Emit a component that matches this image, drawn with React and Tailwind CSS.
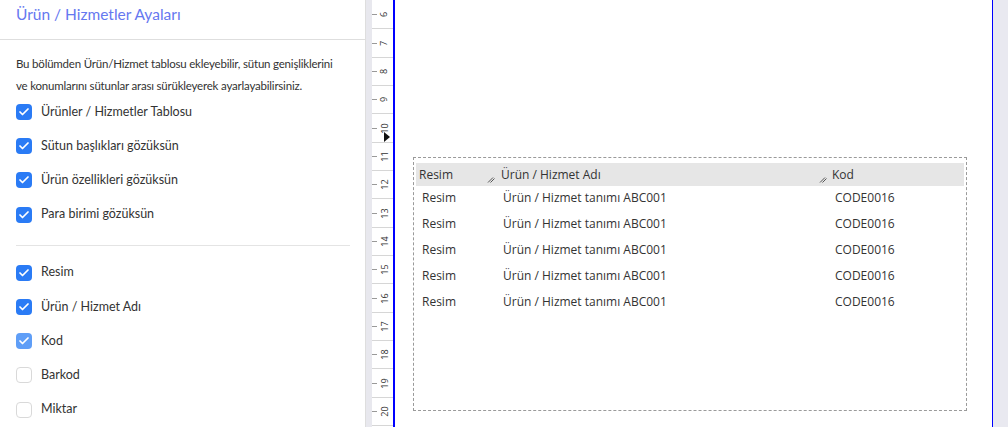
import { Check } from 'lucide-react'

const panelFont = { fontFamily: 'Lato, "Noto Sans", sans-serif' }
const tableFont = { fontFamily: '"Open Sans", "Noto Sans", sans-serif' }

const topChecks = [
  { label: 'Ürünler / Hizmetler Tablosu', state: 'on' },
  { label: 'Sütun başlıkları gözüksün', state: 'on' },
  { label: 'Ürün özellikleri gözüksün', state: 'on' },
  { label: 'Para birimi gözüksün', state: 'on' },
]

const columnChecks = [
  { label: 'Resim', state: 'on' },
  { label: 'Ürün / Hizmet Adı', state: 'on' },
  { label: 'Kod', state: 'dim' },
  { label: 'Barkod', state: 'off' },
  { label: 'Miktar', state: 'off' },
]

const rulerNums = [6, 7, 8, 9, 10, 11, 12, 13, 14, 15, 16, 17, 18, 19, 20]
const rows = [1, 2, 3, 4, 5]

function Box({ state }) {
  if (state === 'off') {
    return <span className="h-4 w-4 shrink-0 rounded-[4px] border border-[#d9d9d9] bg-white" />
  }
  return (
    <span
      className={`flex h-4 w-4 shrink-0 items-center justify-center rounded-[4px] ${
        state === 'dim' ? 'bg-[#5f9ef7]' : 'bg-[#2a7bf5]'
      }`}
    >
      <Check className="h-3 w-3 text-white" strokeWidth={3.5} />
    </span>
  )
}

function CheckRow({ label, state }) {
  return (
    <div className="flex h-[34.2px] shrink-0 items-center gap-[9px]">
      <Box state={state} />
      <span className="text-[12.5px] text-[#333]">{label}</span>
    </div>
  )
}

function Grip() {
  return (
    <svg width="8" height="8" viewBox="0 0 8 8" className="mb-[3px] mr-[2px] shrink-0">
      <path d="M1 7.5L6 2.5M3.5 7.5L7.5 3.5" stroke="#555" strokeWidth="1" fill="none" />
    </svg>
  )
}

export default function App() {
  return (
    <div className="flex h-[427px] w-[1008px] overflow-hidden bg-white">
      {/* sol ayar paneli */}
      <aside className="flex w-[366px] shrink-0 flex-col border-r border-[#dedede]" style={panelFont}>
        <div className="flex h-[40px] shrink-0 items-center border-b border-[#dedede] px-4 pb-[9px]">
          <h2 className="text-[15.5px] text-[#6678f0]">Ürün / Hizmetler Ayaları</h2>
        </div>
        <div className="shrink-0 px-4 pt-[13px]">
          <p className="whitespace-nowrap text-[11.5px] leading-[22px] tracking-[-0.2px] text-[#333]">
            Bu bölümden Ürün/Hizmet tablosu ekleyebilir, sütun genişliklerini
            <br />
            ve konumlarını sütunlar arası sürükleyerek ayarlayabilirsiniz.
          </p>
          <div className="-mt-[2px]">
            {topChecks.map((c) => (
              <CheckRow key={c.label} {...c} />
            ))}
          </div>
          <div className="mb-[10px] mt-[13px] w-[334px] border-t border-[#e4e4e4]" />
          {columnChecks.map((c) => (
            <CheckRow key={c.label} {...c} />
          ))}
        </div>
      </aside>

      {/* cetvel */}
      <div className="w-[6px] shrink-0 bg-[#e8e8ee]" />
      <div className="flex w-[21px] shrink-0 flex-col overflow-hidden bg-white pt-px" style={tableFont}>
        {rulerNums.map((n) => (
          <div key={n} className="relative flex h-[28.35px] shrink-0 items-center border-b border-[#d6d6d6]">
            <span className="h-px w-[5px] bg-[#999]" />
            <span className="flex flex-1 justify-center pr-[2px]">
              <span className="-rotate-90 text-[9px] leading-none text-[#333]">{n}</span>
            </span>
            {n === 10 && (
              <svg width="6" height="10" viewBox="0 0 6 10" className="absolute left-[12px] top-[18px]">
                <path d="M0 0L6 5L0 10Z" fill="#111" />
              </svg>
            )}
          </div>
        ))}
      </div>
      <div className="relative z-10 w-[2px] shrink-0 bg-[#0000ff]" />

      {/* tasarım alanı */}
      <div className="w-[598px] shrink-0 border-r border-[#0000ff] pl-[18px] pt-[157px]" style={tableFont}>
        <div className="h-[254px] w-[554px] border border-dashed border-[#9a9a9a] px-[2px] pt-[5px]">
          <div className="flex h-[23px] bg-[#e6e6e6] text-[12px] text-[#333]">
            <div className="flex w-[81px] items-end justify-between pl-[3px]">
              <span className="self-center">Resim</span>
              <Grip />
            </div>
            <div className="flex w-[332px] items-end justify-between pl-[4px]">
              <span className="self-center">Ürün / Hizmet Adı</span>
              <Grip />
            </div>
            <div className="flex flex-1 items-center pl-[3px]">Kod</div>
          </div>
          <div className="-mt-px">
            {rows.map((r) => (
              <div key={r} className="flex h-[26px] items-center text-[12px] text-[#333]">
                <span className="w-[81px] pl-[6px]">Resim</span>
                <span className="w-[332px] pl-[6px]">Ürün / Hizmet tanımı ABC001</span>
                <span className="flex-1 pl-[6px]">CODE0016</span>
              </div>
            ))}
          </div>
        </div>
      </div>
      <div className="flex-1 bg-[#e9e9f0]" />
    </div>
  )
}
